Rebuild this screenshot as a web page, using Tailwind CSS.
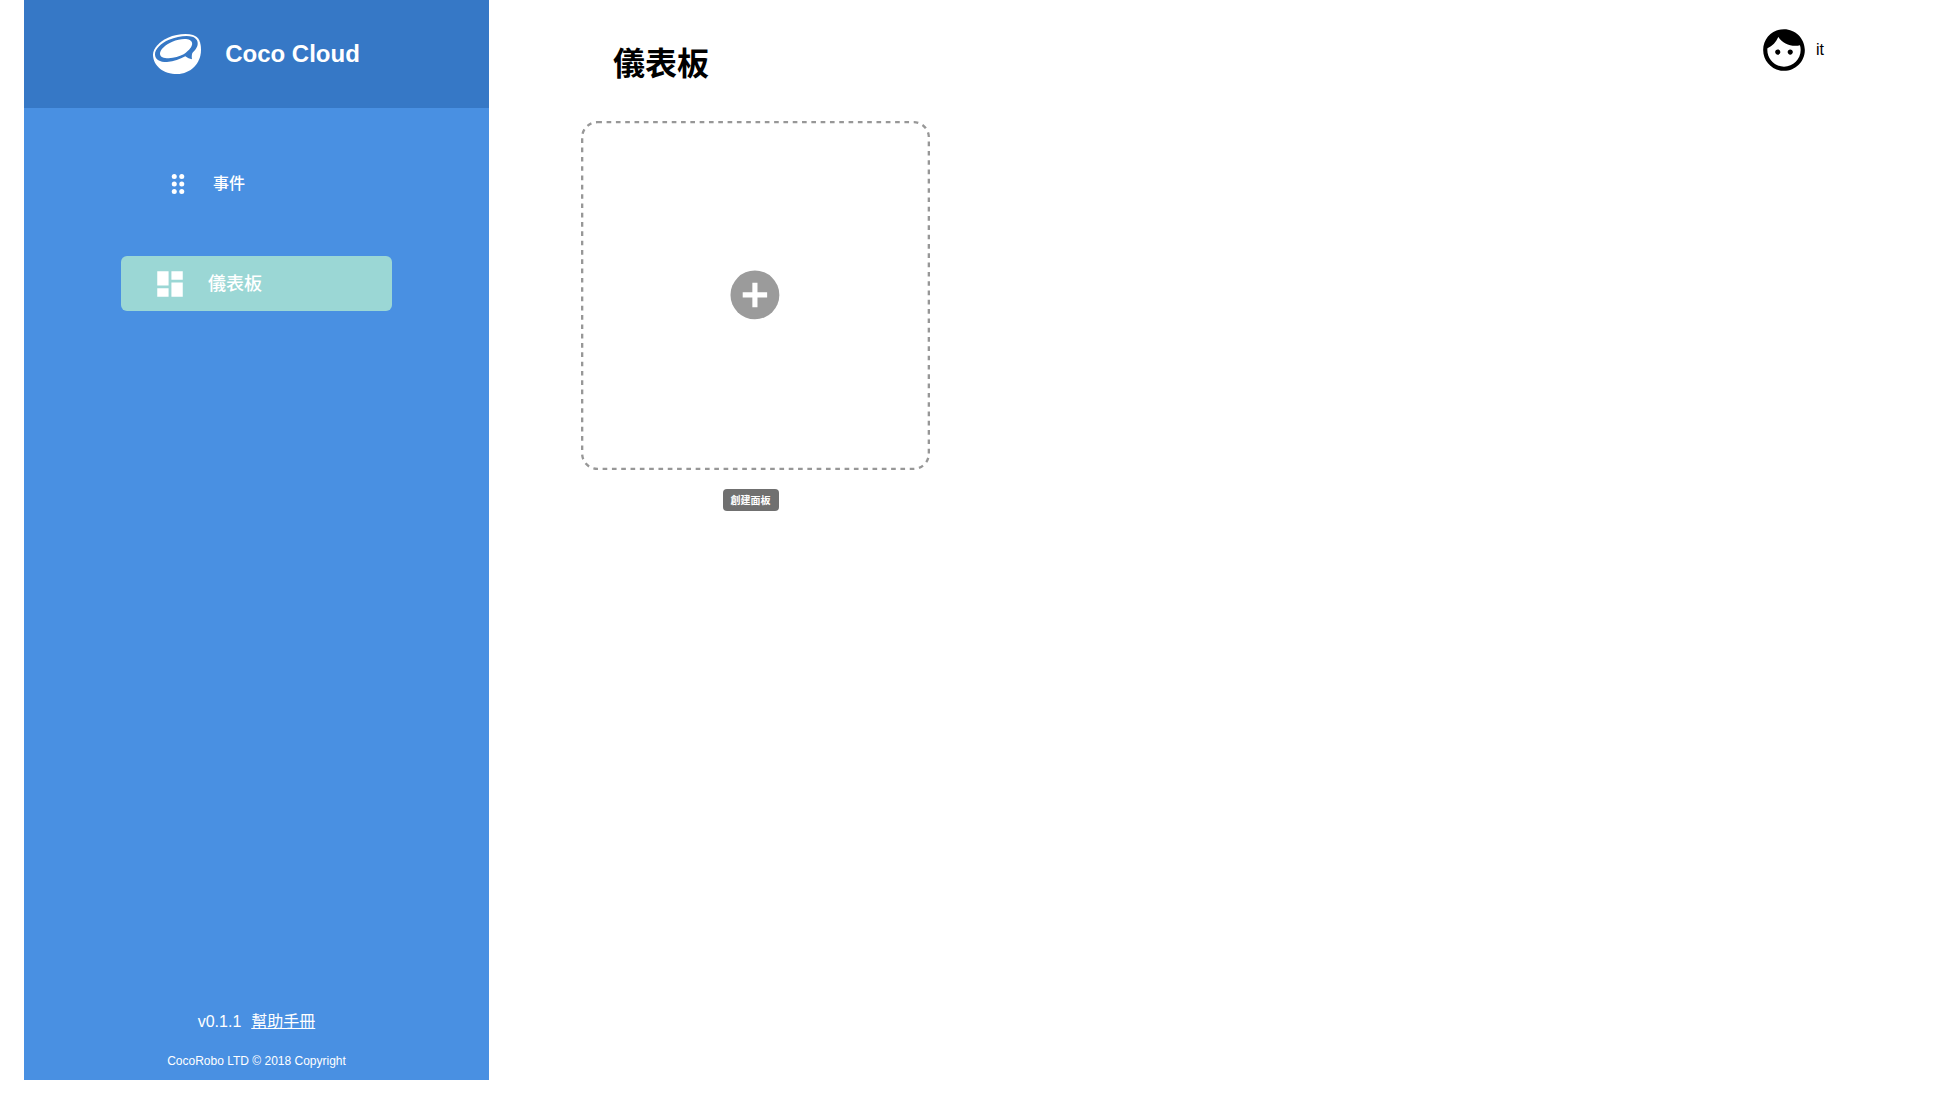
<!DOCTYPE html>
<html lang="zh-Hant">
<head>
<meta charset="utf-8">
<meta name="viewport" content="width=device-width, initial-scale=1">
<title>Coco Cloud</title>
<script src="https://cdn.jsdelivr.net/npm/@tailwindcss/browser@4"></script>
</head>
<body class="bg-white font-['Liberation_Sans','Noto_Sans_CJK_TC',sans-serif] text-black">
<div class="flex min-h-screen pb-7 pl-6">
  <aside class="flex w-[465px] shrink-0 flex-col bg-[#4990e2] text-white">
    <header class="flex h-[108px] items-center justify-center gap-6 bg-[#3678c6]">
      <svg class="h-10 w-12" viewBox="0 0 144 120" aria-hidden="true">
        <path fill="#fff" d="M0 62C0 42 20 22 45 11C68 1 100-3 120 3C138 9 144 25 144 48C144 88 113 120 72 120C32 120 0 96 0 62Z"/>
        <path fill="#3678c6" d="M6 62C5 45 24 27 48 17C72 7 102 3 118 8C131 12 137 23 133 36C130 45 123 52 118 57C116 63 116 69 117 76C110 74 103 72 97 67C80 76 64 83 42 84C20 84 7 77 6 62Z"/>
        <path fill="#fff" d="M21 60C20 47 37 32 58 23C77 15 100 13 110 18C120 23 119 33 113 41C108 48 101 54 92 61C78 68 64 72 47 73C31 73 22 69 21 60Z"/>
      </svg>
      <span class="text-2xl font-bold">Coco Cloud</span>
    </header>
    <nav class="mx-auto mt-12 flex w-[271px] flex-col gap-[45px] font-medium">
      <a href="#events" class="flex h-[55px] items-center gap-5 rounded-md pl-[42px] text-base">
        <svg class="size-[30px]" viewBox="0 0 24 24" fill="currentColor" aria-hidden="true">
          <circle cx="9" cy="6" r="2"/><circle cx="15" cy="6" r="2"/>
          <circle cx="9" cy="12" r="2"/><circle cx="15" cy="12" r="2"/>
          <circle cx="9" cy="18" r="2"/><circle cx="15" cy="18" r="2"/>
        </svg>
        事件
      </a>
      <a href="#dashboard" aria-current="page" class="flex h-[55px] items-center gap-[21px] rounded-md bg-[#9bd7d5] pl-8 text-lg">
        <svg class="size-[34px]" viewBox="0 0 24 24" fill="currentColor" aria-hidden="true">
          <path d="M3 13h8V3H3v10zm0 8h8v-6H3v6zm10 0h8V11h-8v10zm0-18v6h8V3h-8z"/>
        </svg>
        儀表板
      </a>
    </nav>
    <footer class="mt-auto pb-[11px] text-center">
      <p class="flex justify-center gap-2.5 text-base">v0.1.1 <a href="#help" class="underline">幫助手冊</a></p>
      <p class="mt-[19px] text-xs">CocoRobo LTD © 2018 Copyright</p>
    </footer>
  </aside>
  <main class="flex-1 pl-[92px]">
    <div class="flex items-start justify-between pr-[120px]">
      <h1 class="mt-10 pl-8 text-[32px] leading-12 font-bold">儀表板</h1>
      <button type="button" class="mt-[25px] flex items-center gap-[7px] text-base">
        <svg class="size-[50px]" viewBox="0 0 24 24" fill="currentColor" aria-hidden="true">
          <path d="M9 11.75c-.69 0-1.25.56-1.25 1.25s.56 1.25 1.25 1.25 1.25-.56 1.25-1.25-.56-1.25-1.25-1.25zm6 0c-.69 0-1.25.56-1.25 1.25s.56 1.25 1.25 1.25 1.25-.56 1.25-1.25-.56-1.25-1.25-1.25zM12 2C6.48 2 2 6.48 2 12s4.480 10 10 10 10-4.480 10-10S17.520 2 12 2zm0 18c-4.410 0-8-3.590-8-8 0-.29.02-.58.05-.86 2.360-1.050 4.230-2.980 5.210-5.370C11.070 8.330 14.050 10 17.420 10c.78 0 1.530-.09 2.250-.26.21.71.33 1.470.33 2.260 0 4.410-3.590 8-8 8z"/>
        </svg>
        it
      </button>
    </div>
    <div class="mt-[33px] flex w-[349px] flex-col items-center">
      <button type="button" aria-label="創建面板" class="block w-full">
        <svg class="w-full" viewBox="0 0 300 300" aria-hidden="true">
          <rect x="1" y="1" width="298" height="298" rx="13" fill="none" stroke="#979797" stroke-width="2" stroke-dasharray="4"/>
          <circle cx="149.500" cy="149.500" r="21" fill="#9b9b9b"/>
          <path d="M149.500 139v21M139 149.500h21" stroke="#fff" stroke-width="4.400"/>
        </svg>
      </button>
      <span class="mt-[19px] mr-2.5 flex h-[22px] w-14 items-center justify-center rounded bg-[#707070] text-[10px] font-bold text-white">創建面板</span>
    </div>
  </main>
</div>
</body>
</html>
